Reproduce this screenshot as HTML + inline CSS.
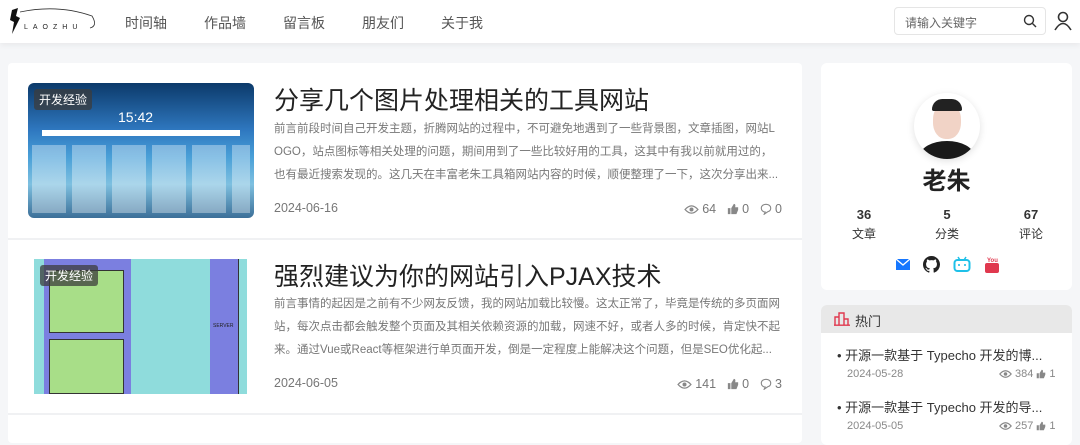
<!DOCTYPE html>
<html><head><meta charset="utf-8"><style>
*{margin:0;padding:0;box-sizing:border-box}
body{width:1080px;height:435px;overflow:hidden;background:#f5f6f8;font-family:"Liberation Sans","Noto Sans CJK SC",sans-serif;color:#333;position:relative}
.hdr{position:absolute;left:0;top:0;width:1080px;height:43px;background:#fff;box-shadow:0 2px 6px rgba(0,0,0,.06)}
.nav a{position:absolute;top:13px;font-size:14px;color:#555;text-decoration:none}
.search{position:absolute;left:894px;top:7px;width:152px;height:28px;border:1px solid #e5e5e5;border-radius:4px;font-size:12px;color:#666;padding:6px 10px}
.main{position:absolute;left:8px;top:63px;width:794px;height:380px;background:#fff;border-radius:4px}
.art{position:absolute;left:0;width:794px;border-bottom:2px solid #f0f1f3}
.img{position:absolute;border-radius:6px;overflow:hidden}
.tag{position:absolute;left:6px;top:6px;background:rgba(60,60,60,.75);color:#fff;font-size:12px;padding:2px 5px;border-radius:3px}
.t{position:absolute;left:266px;font-size:25px;color:#222;white-space:nowrap}
.ex{position:absolute;left:266px;font-size:11.5px;line-height:23px;color:#777;white-space:nowrap}
.dt{position:absolute;left:266px;font-size:12.5px;color:#777}
.st{position:absolute;right:20px;font-size:12.5px;color:#777;display:flex;gap:3px;align-items:center}
.st svg{margin-left:8px}
.card{position:absolute;left:821px;width:251px;background:#fff;border-radius:6px}
.hot li{list-style:none;position:absolute;left:16px;font-size:13px;color:#333;white-space:nowrap}
.sub{position:absolute;font-size:11px;color:#888;display:flex;align-items:center;gap:3px}
</style></head><body>
<svg width="0" height="0" style="position:absolute"><defs>
<symbol id="eye" viewBox="0 0 16 12"><path d="M1 6Q8 -2 15 6Q8 14 1 6Z" fill="none" stroke="#888" stroke-width="1.4"/><circle cx="8" cy="6" r="2.2" fill="#888"/></symbol>
<symbol id="like" viewBox="0 0 14 14"><path d="M1 6h3v7H1zM5 6l3-5c2 0 2 2 1.5 4H13v3l-2 5H5z" fill="#888"/></symbol>
<symbol id="cmt" viewBox="0 0 14 14"><path d="M7 1.5C3.5 1.5 1.5 3.5 1.5 6s2 4.5 4.5 4.5L5 13l4-2.8c2.5-.5 3.5-2.3 3.5-4.2 0-2.5-2-4.5-5.5-4.5z" fill="none" stroke="#888" stroke-width="1.3"/></symbol>
</defs></svg>
<div class="hdr">
 <svg style="position:absolute;left:8px;top:6px" width="90" height="30"><path d="M4 4 L10 2 L8 10 L12 12 L4 28 L6 16 L2 14 Z" fill="#111"/><path d="M12 6 Q50 -2 84 10 Q90 20 82 22" fill="none" stroke="#333" stroke-width=".8"/><text x="16" y="23" font-size="7" letter-spacing="5" fill="#222" font-family="Liberation Sans">LAOZHU</text></svg>
 <div class="nav"><a style="left:125px">时间轴</a><a style="left:204px">作品墙</a><a style="left:283px">留言板</a><a style="left:362px">朋友们</a><a style="left:441px">关于我</a></div>
 <div class="search">请输入关键字<svg style="position:absolute;right:8px;top:6px" width="14" height="14"><circle cx="6" cy="6" r="4.5" fill="none" stroke="#333" stroke-width="1.4"/><path d="M9.5 9.5L13 13" stroke="#333" stroke-width="1.4"/></svg></div>
 <svg style="position:absolute;left:1054px;top:11px" width="18" height="20"><circle cx="9" cy="6" r="4.5" fill="none" stroke="#333" stroke-width="1.6"/><path d="M1 19 Q9 6 17 19" fill="none" stroke="#333" stroke-width="1.6"/></svg>
</div>
<div class="main">
 <div class="art" style="top:0;height:177px">
  <div class="img" style="left:20px;top:20px;width:226px;height:135px;background:linear-gradient(180deg,#0c3a6a 0%,#2f78c0 35%,#4aa0d8 55%,#7ec0e0 75%,#3c6f98 100%)">
   <div style="position:absolute;left:90px;top:26px;color:#fff;font-size:14px">15:42</div>
   <div style="position:absolute;left:14px;top:47px;width:198px;height:6px;background:#fff"></div>
   <div style="position:absolute;left:4px;top:62px;width:218px;height:68px;background:repeating-linear-gradient(90deg,rgba(255,255,255,.35) 0 34px,transparent 34px 40px)"></div>
   <div class="tag">开发经验</div></div>
  <div class="t" style="top:18px">分享几个图片处理相关的工具网站</div>
  <div class="ex" style="top:55px">前言前段时间自己开发主题，折腾网站的过程中，不可避免地遇到了一些背景图，文章插图，网站L<br>OGO，站点图标等相关处理的问题，期间用到了一些比较好用的工具，这其中有我以前就用过的，<br>也有最近搜索发现的。这几天在丰富老朱工具箱网站内容的时候，顺便整理了一下，这次分享出来...</div>
  <div class="dt" style="top:138px">2024-06-16</div>
  <div class="st" style="top:139px"><svg width="15" height="11"><use href="#eye"/></svg>64<svg width="12" height="12"><use href="#like"/></svg>0<svg width="12" height="12"><use href="#cmt"/></svg>0</div>
 </div>
 <div class="art" style="top:177px;height:175px">
  <div class="img" style="left:26px;top:19px;width:213px;height:135px;border-radius:0;background:#8fdcdc">
   <div style="position:absolute;left:10px;top:0;width:87px;height:135px;background:#7b7fe0"></div>
   <div style="position:absolute;left:15px;top:11px;width:75px;height:63px;background:#a8de88;border:1px solid #333"></div>
   <div style="position:absolute;left:15px;top:80px;width:75px;height:55px;background:#a8de88;border:1px solid #333"></div>
   <div style="position:absolute;left:176px;top:0;width:29px;height:135px;background:#7b7fe0;border-right:1px solid #333"></div>
   <div style="position:absolute;left:179px;top:64px;font-size:5px;color:#222">SERVER</div>
   <div class="tag">开发经验</div></div>
  <div class="t" style="top:17px">强烈建议为你的网站引入PJAX技术</div>
  <div class="ex" style="top:53px">前言事情的起因是之前有不少网友反馈，我的网站加载比较慢。这太正常了，毕竟是传统的多页面网<br>站，每次点击都会触发整个页面及其相关依赖资源的加载，网速不好，或者人多的时候，肯定快不起<br>来。通过Vue或React等框架进行单页面开发，倒是一定程度上能解决这个问题，但是SEO优化起...</div>
  <div class="dt" style="top:136px">2024-06-05</div>
  <div class="st" style="top:137px"><svg width="15" height="11"><use href="#eye"/></svg>141<svg width="12" height="12"><use href="#like"/></svg>0<svg width="12" height="12"><use href="#cmt"/></svg>3</div>
 </div>
</div>
<div class="card" style="top:63px;height:227px">
 <div style="position:absolute;left:93px;top:30px;width:66px;height:66px;border-radius:50%;background:#fff;box-shadow:0 2px 8px rgba(0,0,0,.12);overflow:hidden">
  <div style="position:absolute;left:19px;top:10px;width:28px;height:36px;border-radius:45%;background:#f1d3c6"></div>
  <div style="position:absolute;left:18px;top:6px;width:30px;height:12px;border-radius:12px 12px 2px 2px;background:#222"></div>
  <div style="position:absolute;left:6px;top:48px;width:54px;height:30px;border-radius:50% 50% 0 0;background:#1a1a1a"></div></div>
 <div style="position:absolute;left:0;width:251px;top:98px;text-align:center;font-size:24px;font-weight:bold;color:#222">老朱</div>
 <div style="position:absolute;left:0;top:144px;width:251px;font-size:13px;text-align:center">
  <div style="position:absolute;left:21px;width:44px"><b>36</b><div style="font-size:12px;margin-top:3px">文章</div></div>
  <div style="position:absolute;left:104px;width:44px"><b>5</b><div style="font-size:12px;margin-top:3px">分类</div></div>
  <div style="position:absolute;left:188px;width:44px"><b>67</b><div style="font-size:12px;margin-top:3px">评论</div></div></div>
 <svg style="position:absolute;left:75px;top:196px" width="14" height="11"><rect width="14" height="11" fill="#1677ff"/><path d="M0 0L7 6L14 0" fill="none" stroke="#fff" stroke-width="1.3"/></svg>
 <svg style="position:absolute;left:102px;top:193px" width="17" height="17" viewBox="0 0 16 16"><path fill="#222" d="M8 0C3.58 0 0 3.58 0 8c0 3.54 2.29 6.53 5.47 7.59.4.07.55-.17.55-.38v-1.33c-2.23.48-2.7-1.08-2.7-1.08-.36-.92-.89-1.17-.89-1.17-.73-.5.06-.49.06-.49.8.06 1.23.82 1.23.82.71 1.22 1.87.87 2.33.66.07-.52.28-.87.51-1.07-1.78-.2-3.65-.89-3.65-3.95 0-.87.31-1.59.82-2.15-.08-.2-.36-1.02.08-2.12 0 0 .67-.21 2.2.82a7.6 7.6 0 0 1 4 0c1.53-1.04 2.2-.82 2.2-.82.44 1.1.16 1.92.08 2.12.51.56.82 1.27.82 2.15 0 3.07-1.87 3.75-3.65 3.95.29.25.54.73.54 1.48v2.2c0 .21.15.46.55.38A8 8 0 0 0 16 8c0-4.42-3.58-8-8-8z"/></svg>
 <svg style="position:absolute;left:132px;top:193px" width="18" height="17"><path d="M5 1L7 4M13 1L11 4" stroke="#1ec0e8" stroke-width="1.5"/><rect x="1.5" y="4" width="15" height="11" rx="3" fill="none" stroke="#1ec0e8" stroke-width="2"/><path d="M6 8v2M12 8v2" stroke="#1ec0e8" stroke-width="1.6"/></svg>
 <svg style="position:absolute;left:164px;top:192px" width="14" height="18"><text x="2" y="7" font-size="6" fill="#e0384e" font-weight="bold" font-family="Liberation Sans">You</text><rect x="0" y="8" width="14" height="10" rx="2" fill="#e0384e"/></svg>
</div>
<div class="card hot" style="top:305px;height:140px">
 <div style="height:28px;background:#e8e8e8;border-radius:6px 6px 0 0;font-size:13px;padding:6px 0 0 34px">热门</div>
 <svg style="position:absolute;left:13px;top:7px" width="16" height="14"><path d="M1 13V5h4v8M5 13V1h5v12M10 13V7h4v6M0 13.2h16" fill="none" stroke="#e0384e" stroke-width="1.4"/></svg>
 <li style="top:40px">• 开源一款基于 Typecho 开发的博...</li>
 <div class="sub" style="left:26px;top:63px">2024-05-28</div><div class="sub" style="left:178px;top:63px"><svg width="13" height="10"><use href="#eye"/></svg>384 <svg width="10" height="10"><use href="#like"/></svg>1</div>
 <li style="top:92px">• 开源一款基于 Typecho 开发的导...</li>
 <div class="sub" style="left:26px;top:115px">2024-05-05</div><div class="sub" style="left:178px;top:115px"><svg width="13" height="10"><use href="#eye"/></svg>257 <svg width="10" height="10"><use href="#like"/></svg>1</div>
</div>
</body></html>
